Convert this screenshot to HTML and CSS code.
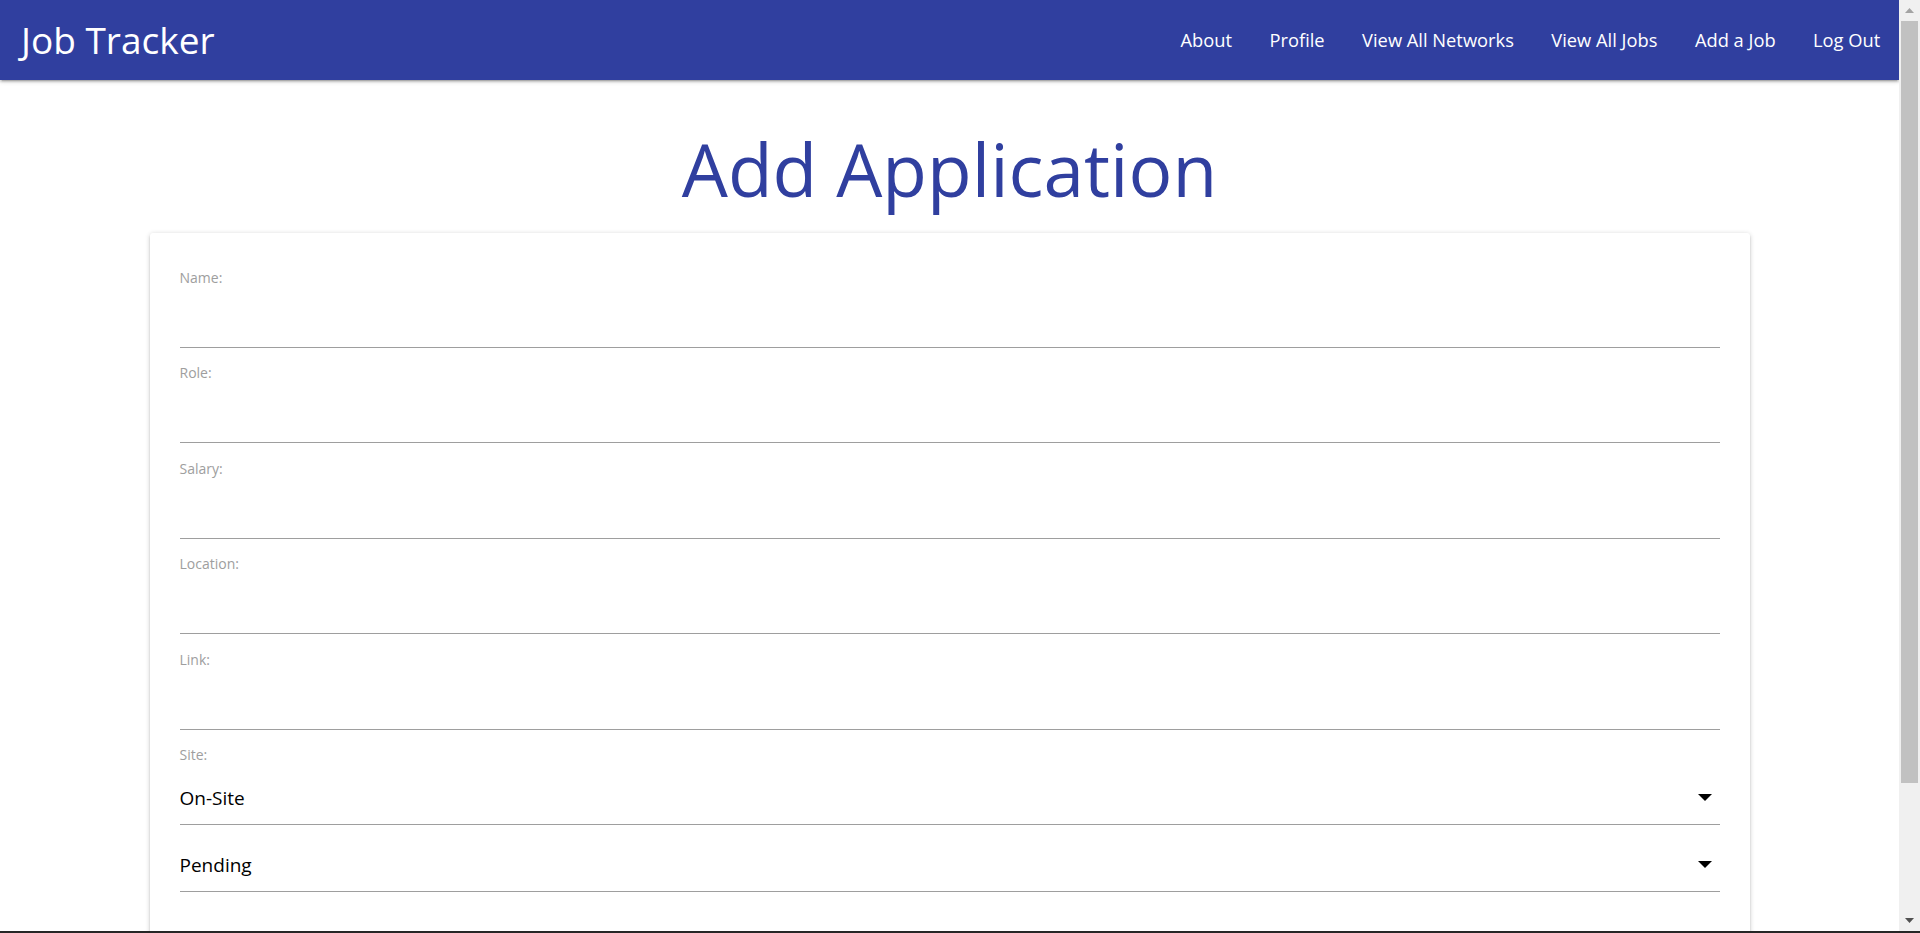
FILE: index.html
```html
<!DOCTYPE html>
<html lang="en">
<head>
<meta charset="utf-8">
<title>Job Tracker - Add Application</title>
<link rel="stylesheet" href="styles.css">
</head>
<body>
<div class="shell">
  <div class="viewport">
    <nav class="topnav">
      <a class="brand" href="#">Job Tracker</a>
      <ul class="navlinks">
        <li><a href="#">About</a></li>
        <li><a href="#">Profile</a></li>
        <li><a href="#">View All Networks</a></li>
        <li><a href="#">View All Jobs</a></li>
        <li><a href="#">Add a Job</a></li>
        <li><a href="#">Log Out</a></li>
      </ul>
    </nav>
    <main class="page">
      <h1 class="title">Add Application</h1>
      <form class="card">
        <div class="field">
          <label class="label" for="name">Name:</label>
          <input class="input" id="name" type="text">
        </div>
        <div class="field">
          <label class="label" for="role">Role:</label>
          <input class="input" id="role" type="text">
        </div>
        <div class="field">
          <label class="label" for="salary">Salary:</label>
          <input class="input" id="salary" type="text">
        </div>
        <div class="field">
          <label class="label" for="location">Location:</label>
          <input class="input" id="location" type="text">
        </div>
        <div class="field">
          <label class="label" for="link">Link:</label>
          <input class="input" id="link" type="text">
        </div>
        <div class="field">
          <span class="label">Site:</span>
          <div class="select">
            <span class="select-value">On-Site</span>
            <svg class="caret" width="14" height="7" viewBox="0 0 14 7"><polygon points="0,0 14,0 7,7" fill="#000"/></svg>
          </div>
        </div>
        <div class="field field-nolabel">
          <div class="select">
            <span class="select-value">Pending</span>
            <svg class="caret" width="14" height="7" viewBox="0 0 14 7"><polygon points="0,0 14,0 7,7" fill="#000"/></svg>
          </div>
        </div>
      </form>
    </main>
  </div>
  <div class="scrollbar" aria-hidden="true">
    <div class="sb-btn">
      <svg width="9" height="5" viewBox="0 0 9 5"><polygon points="4.5,0 9,5 0,5" fill="#a3a3a3"/></svg>
    </div>
    <div class="sb-track">
      <div class="sb-thumb"></div>
    </div>
    <div class="sb-btn">
      <svg width="9" height="5" viewBox="0 0 9 5"><polygon points="0,0 9,0 4.5,5" fill="#505050"/></svg>
    </div>
  </div>
</div>
<div class="frame-edge"></div>
</body>
</html>
```
FILE: styles.css
```css
html, body {
  margin: 0;
  height: 100%;
  overflow: hidden;
}
body {
  display: flex;
  flex-direction: column;
  background: #fff;
  font-family: "Open Sans", "Noto Sans", sans-serif;
  color: rgba(0, 0, 0, 0.87);
}

.shell {
  display: flex;
  flex: 1;
  min-height: 0;
}
.viewport {
  flex: 1;
  min-width: 0;
  overflow: hidden;
}
.frame-edge {
  height: 2px;
  background: #262626;
}

/* fake window scrollbar */
.scrollbar {
  display: flex;
  flex-direction: column;
  width: 21px;
  background: #f0f0f0;
}
.sb-btn {
  display: flex;
  align-items: center;
  justify-content: center;
  height: 21px;
}
.sb-track {
  flex: 1;
  display: flex;
  flex-direction: column;
  padding: 0 2px;
}
.sb-thumb {
  height: 762px;
  background: #c1c1c1;
}

/* navbar */
.topnav {
  display: flex;
  align-items: center;
  justify-content: space-between;
  height: 80px;
  background: #303f9f;
  box-shadow: 0 2px 2px 0 rgba(0,0,0,.14), 0 3px 1px -2px rgba(0,0,0,.12), 0 1px 5px 0 rgba(0,0,0,.2);
  position: relative;
}
.brand {
  padding-left: 21px;
  font-size: 37px;
  line-height: 80px;
  color: #fff;
  text-decoration: none;
}
.navlinks {
  display: flex;
  margin: 0;
  padding: 0;
  list-style: none;
}
.navlinks a {
  display: block;
  padding: 0 18.75px;
  font-size: 18.3px;
  line-height: 78px;
  color: #fff;
  text-decoration: none;
}

/* page */
.title {
  margin: 47px 0 22px;
  text-align: center;
  font-size: 73px;
  line-height: 84px;
  font-weight: 400;
  color: #303f9f;
}

.card {
  width: 1600px;
  margin: 0 auto;
  padding: 34.5px 30px 120px;
  box-sizing: border-box;
  background: #fff;
  border-radius: 3px;
  box-shadow: 0 2px 2px 0 rgba(0,0,0,.14), 0 3px 1px -2px rgba(0,0,0,.12), 0 1px 5px 0 rgba(0,0,0,.2);
}
.field {
  display: flex;
  flex-direction: column;
}
.field + .field {
  margin-top: 15.5px;
}
.label {
  font-size: 14px;
  line-height: 20px;
  color: #9e9e9e;
}
.input {
  height: 60px;
  margin: 0;
  padding: 0;
  box-sizing: border-box;
  border: none;
  border-bottom: 1px solid #9e9e9e;
  outline: none;
  background: transparent;
  font-family: inherit;
  font-size: 19px;
}
.select {
  display: flex;
  align-items: center;
  justify-content: space-between;
  height: 60px;
  box-sizing: border-box;
  padding: 6px 8px 0 0;
  border-bottom: 1px solid #9e9e9e;
}
.select-value {
  font-size: 19px;
  line-height: 40px;
  color: #000;
}
.field-nolabel {
  margin-top: 7px !important;
}
```
